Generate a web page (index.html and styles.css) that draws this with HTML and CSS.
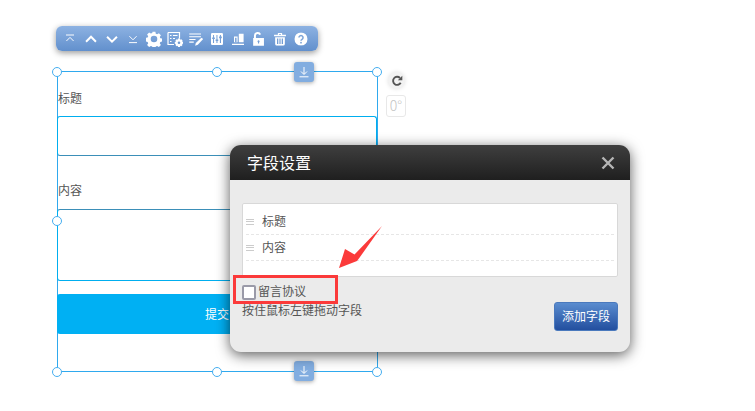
FILE: index.html
```html
<!DOCTYPE html>
<html lang="zh">
<head>
<meta charset="utf-8">
<title>字段设置</title>
<link rel="stylesheet" href="styles.css">
</head>
<body>
<main class="canvas">
  <div class="toolbar">
    <svg class="ti s80" viewBox="0 0 16 16"><path d="M3 3h10M3.500 10.500 8 6l4.500 4.500" class="st"/></svg>
    <svg class="ti s90" viewBox="0 0 16 16"><path d="M2.500 11 8 5.500l5.500 5.500" class="st th"/></svg>
    <svg class="ti s90" viewBox="0 0 16 16"><path d="M2.500 5.500 8 11l5.500-5.500" class="st th"/></svg>
    <svg class="ti s80" viewBox="0 0 16 16"><path d="M3.500 4.500 8 9l4.500-4.500M3 12.500h10" class="st"/></svg>
    <svg class="ti s100" viewBox="0 0 16 16"><path fill-rule="evenodd" class="fl" d="M6.600 1h2.800l.4 2 1.300.6 1.800-1.100 2 2-1.100 1.800.6 1.300 2 .4v2.800l-2 .4-.6 1.300 1.100 1.800-2 2-1.800-1.100-1.300.6-.4 2H6.600l-.4-2-1.300-.6-1.800 1.100-2-2 1.100-1.800-.6-1.300-2-.4V7.200l2-.4.6-1.300L1.100 3.700l2-2 1.800 1.100 1.300-.6zM8 5a3.300 3.300 0 1 0 0 6.600A3.300 3.300 0 0 0 8 5z" transform="translate(0 -.3)"/></svg>
    <svg class="ti s100" viewBox="0 0 16 16"><path d="M1 1.500h11.500v6M1 1.500v12h6M3 4.500h1.500M6 4.500h4.500M3 7.500h1.500M6 7.500h2M3 10.500h1.500" class="st"/><path class="fl" fill-rule="evenodd" d="M11 7.500h2l.3 1.200 1-.5 1.300 1.300-.6 1 1.200.4v1.800l-1.200.3.600 1-1.300 1.300-1-.6-.3 1.300h-2l-.3-1.300-1 .6-1.300-1.300.6-1-1.200-.3v-1.800l1.200-.4-.6-1 1.300-1.300 1 .5zM12 10.500a1.300 1.300 0 1 0 0 2.600 1.300 1.300 0 0 0 0-2.600z"/></svg>
    <svg class="ti s90" viewBox="0 0 16 16"><path d="M.5 2.500h13M.5 5.500h13M.5 8.500h7M.5 11.500h5" class="st"/><path class="fl" d="M14 6.500l2 1.500-6 6.500-3 1 .8-3z"/></svg>
    <svg class="ti s80" viewBox="0 0 16 16"><path class="fl" fill-rule="evenodd" d="M2 .5h12a1.500 1.500 0 0 1 1.500 1.500v12a1.500 1.500 0 0 1-1.500 1.500H2A1.500 1.500 0 0 1 .5 14V2A1.500 1.500 0 0 1 2 .5zM3 3v3H2v2h1v5h1.300V8h1V6h-1V3zm4.300 0v5.500h-1v2h1V13h1.300v-2.500h1v-2h-1V3zm4.300 0v2h-1v2h1v6H13V7h1V5h-1V3z"/></svg>
    <svg class="ti s80" viewBox="0 0 16 16"><path class="fl" fill-rule="evenodd" d="M9 1.500h6v10.500H9zM3 5h4.500v7H3zM.5 14h15v1.500H.5z"/><path fill="#7ea5d8" d="M4.300 6.300h1.900V12H4.300z"/></svg>
    <svg class="ti s90" viewBox="0 0 16 16"><path d="M3.500 7V4.200a3 3 0 0 1 5.800-1" class="st th"/><path class="fl" fill-rule="evenodd" d="M1.500 7h12v8.500h-12zM7.500 9.500a1.200 1.200 0 0 0-.6 2.200V13h1.200v-1.300a1.200 1.200 0 0 0-.6-2.200z"/></svg>
    <svg class="ti s85" viewBox="0 0 16 16"><path class="fl" fill-rule="evenodd" d="M5.500.8h5V3H15v1.700H1V3h4.500zM6.800 2v1h2.400V2zM2.300 5.800h11.400V14a1.800 1.800 0 0 1-1.800 1.800H4.100A1.800 1.800 0 0 1 2.300 14zM4.500 7.500V14H6V7.500zm2.800 0V14h1.400V7.500zm2.700 0V14h1.500V7.500z"/></svg>
    <svg class="ti s85" viewBox="0 0 16 16"><circle cx="8" cy="8" r="7.700" class="fl"/><path d="M5.600 6.300a2.400 2.400 0 1 1 3.600 2.100c-.9.500-1.200.9-1.200 1.800" class="qm"/><circle cx="8" cy="12.300" r="1.100" fill="#7ea5d8"/></svg>
  </div>

  <section class="selection">
    <form class="form">
      <label class="f-label f-label-first">标题</label>
      <div class="f-input"></div>
      <label class="f-label f-label-second">内容</label>
      <div class="f-area"></div>
      <div class="f-submit">提交</div>
    </form>
    <span class="handle h-tl"></span><span class="handle h-tc"></span><span class="handle h-tr"></span>
    <span class="handle h-ml"></span>
    <span class="handle h-bl"></span><span class="handle h-bc"></span><span class="handle h-br"></span>
    <span class="drop drop-top"><svg viewBox="0 0 12 12" class="drop-i"><path d="M6 1v7M3 5.500 6 8.500l3-3M1.500 10.800h9"/></svg></span>
    <span class="drop drop-bottom"><svg viewBox="0 0 12 12" class="drop-i"><path d="M6 1v7M3 5.500 6 8.500l3-3M1.500 10.800h9"/></svg></span>
    <span class="rotate"><svg viewBox="0 0 14 14" class="rotate-i"><path d="M11.300 9A4.700 4.700 0 1 1 10.500 3.500" /><path class="rotate-h" d="M8 6.200h5.200V.8z"/></svg></span>
    <span class="angle">0°</span>
  </section>

  <section class="dialog">
    <header class="d-head">
      <h2 class="d-title">字段设置</h2>
      <svg class="d-close" viewBox="0 0 14 14"><path d="M1.500 1.500l11 11M12.500 1.500l-11 11"/></svg>
    </header>
    <div class="d-body">
      <ul class="d-list">
        <li class="d-row"><span class="grip"></span>标题</li>
        <li class="d-row"><span class="grip"></span>内容</li>
      </ul>
      <div class="d-foot">
        <div class="d-notes">
          <label class="d-check"><span class="box"></span>留言协议</label>
          <p class="d-hint">按住鼠标左键拖动字段</p>
        </div>
        <button class="d-btn" type="button">添加字段</button>
      </div>
    </div>
  </section>

  <div class="mark"></div>
  <svg class="arrow" viewBox="0 0 50 48"><path d="M1 46 7 27 16.500 32.500 44 4 22 35 19 39z"/></svg>
</main>
</body>
</html>
```

FILE: styles.css
```css
* { box-sizing: border-box; }
html, body { margin: 0; padding: 0; background: #fff; }
body { font: 12px/1.2 "Noto Sans CJK SC", "Liberation Sans", sans-serif; color: #555; }
.canvas { position: relative; width: 755px; height: 411px; overflow: hidden; }

.toolbar {
  position: absolute; left: 56px; top: 26px; width: 262px; height: 25px;
  display: flex; align-items: center; gap: 5px; padding: 0 6px;
  border-radius: 6px;
  background: linear-gradient(#8db2e2, #6290cd);
  box-shadow: 0 2px 6px rgba(0,0,0,.4);
}
.ti { width: 16px; height: 16px; flex: none; }
.s80 { transform: scale(.8); }
.s85 { transform: scale(.85); }
.s90 { transform: scale(.9); }
.s100 { transform: none; }
.st { fill: none; stroke: #fff; stroke-width: 1.2; }
.th { stroke-width: 2.200; }
.fl { fill: #fff; }
.qm { fill: none; stroke: #7ea5d8; stroke-width: 1.800; }

.selection {
  position: absolute; left: 57px; top: 71px; width: 321px; height: 301px;
  border: 1px solid #2fa9ee;
}
.form { display: flex; flex-direction: column; margin-left: -1px; }
.f-label { height: 17px; line-height: 17px; color: #555; padding-left: 1px; }
.f-label-first { margin-top: 17px; }
.f-label-second { margin-top: 25px; }
.f-input {
  margin-top: 10px; height: 40px;
  border: 1px solid #00aeef; border-bottom-color: #3b8fb8; border-radius: 3px;
}
.f-area {
  margin-top: 11px; height: 72px;
  border: 1px solid #00aeef; border-top-color: #3b8fb8; border-radius: 3px;
}
.f-submit {
  margin-top: 13px; height: 40px; line-height: 39px;
  background: #00b0f3; color: #fff; border-radius: 3px;
  text-align: center; font-size: 12px; letter-spacing: 0;
}

.handle {
  position: absolute; width: 10px; height: 10px; border-radius: 50%;
  background: #fff; border: 1.500px solid #45aef0;
}
.h-tl { left: -6px; top: -5px; }
.h-tc { left: 154px; top: -5px; }
.h-tr { left: 314px; top: -5px; }
.h-ml { left: -6px; top: 144px; }
.h-bl { left: -6px; top: 295px; }
.h-bc { left: 154px; top: 295px; }
.h-br { left: 314px; top: 295px; }

.drop {
  position: absolute; left: 236px; width: 20px; height: 20px;
  display: flex; align-items: center; justify-content: center;
  background: #82ade0; border-radius: 3px;
  box-shadow: 0 1px 4px rgba(0,0,0,.35);
}
.drop-top { top: -10px; }
.drop-bottom { top: 289px; }
.drop-i { width: 12px; height: 12px; fill: none; stroke: #fff; stroke-width: 1; }

.rotate {
  position: absolute; left: 330px; top: 0; width: 17px; height: 17px;
  display: flex; align-items: center; justify-content: center;
  background: #f2f2f2; border-radius: 50%;
  box-shadow: 0 0 4px rgba(0,0,0,.12);
}
.rotate-i { width: 12px; height: 12px; fill: none; stroke: #555; stroke-width: 2.200; }
.rotate-h { fill: #555; stroke: none; }
.angle {
  position: absolute; left: 328px; top: 23px; width: 20px; height: 22px;
  border: 1px solid #e8e8e8; border-radius: 3px;
  font-size: 14px; font-weight: 300; line-height: 19px; text-align: center; color: #c4c4c4;
}

.dialog {
  position: absolute; left: 230px; top: 145px; width: 400px; height: 207px;
  border-radius: 11px; overflow: hidden; background: #ebebeb;
  box-shadow: 0 3px 14px rgba(0,0,0,.65);
}
.d-head {
  height: 35px; display: flex; align-items: center; justify-content: space-between;
  padding: 0 15px 0 17px;
  background: linear-gradient(#3f3f3f, #1f1f1f);
}
.d-title { margin: 0; font-size: 16px; font-weight: 400; color: #fff; line-height: 35px; }
.d-close { width: 14px; height: 14px; fill: none; stroke: #b5b5b5; stroke-width: 2.400; }
.d-body { padding: 23px 12px 0; }
.d-list {
  list-style: none; margin: 0; padding: 5px 0 0; height: 74px;
  background: #fff; border: 1px solid #d8d8d8; border-radius: 2px;
}
.d-row {
  height: 26px; margin: 0 3px; display: flex; align-items: center; gap: 8px;
  border-bottom: 1px dashed #e6e6e6; color: #555; font-size: 12px;
}
.grip {
  width: 8px; height: 6px;
  border-top: 1px solid #ccc; border-bottom: 1px solid #ccc;
  background: linear-gradient(#ccc, #ccc) center / 100% 1px no-repeat;
}
.d-foot { display: flex; justify-content: space-between; align-items: flex-start; padding-top: 5px; }
.d-check { display: flex; align-items: center; gap: 2px; height: 17px; color: #555; margin-top: 1px; }
.box {
  width: 14px; height: 15px; background: #fff; margin-top: 1px;
  border: 2px solid #9a9aa8; border-radius: 2px;
}
.d-hint { margin: 1px 0 0; height: 17px; line-height: 17px; color: #555; }
.d-btn {
  margin-top: 20px; width: 64px; height: 29px; padding: 0;
  font: inherit; color: #fff; border: 1px solid #4a79bd; border-radius: 3px;
  background: linear-gradient(#5a8ccf, #234f9f);
}

.mark {
  position: absolute; left: 233px; top: 275px; width: 105px; height: 29px;
  border: 3px solid #fb3a3a;
}
.arrow { position: absolute; left: 338px; top: 222px; width: 50px; height: 48px; }
.arrow path { fill: #fb3a3a; }
```
